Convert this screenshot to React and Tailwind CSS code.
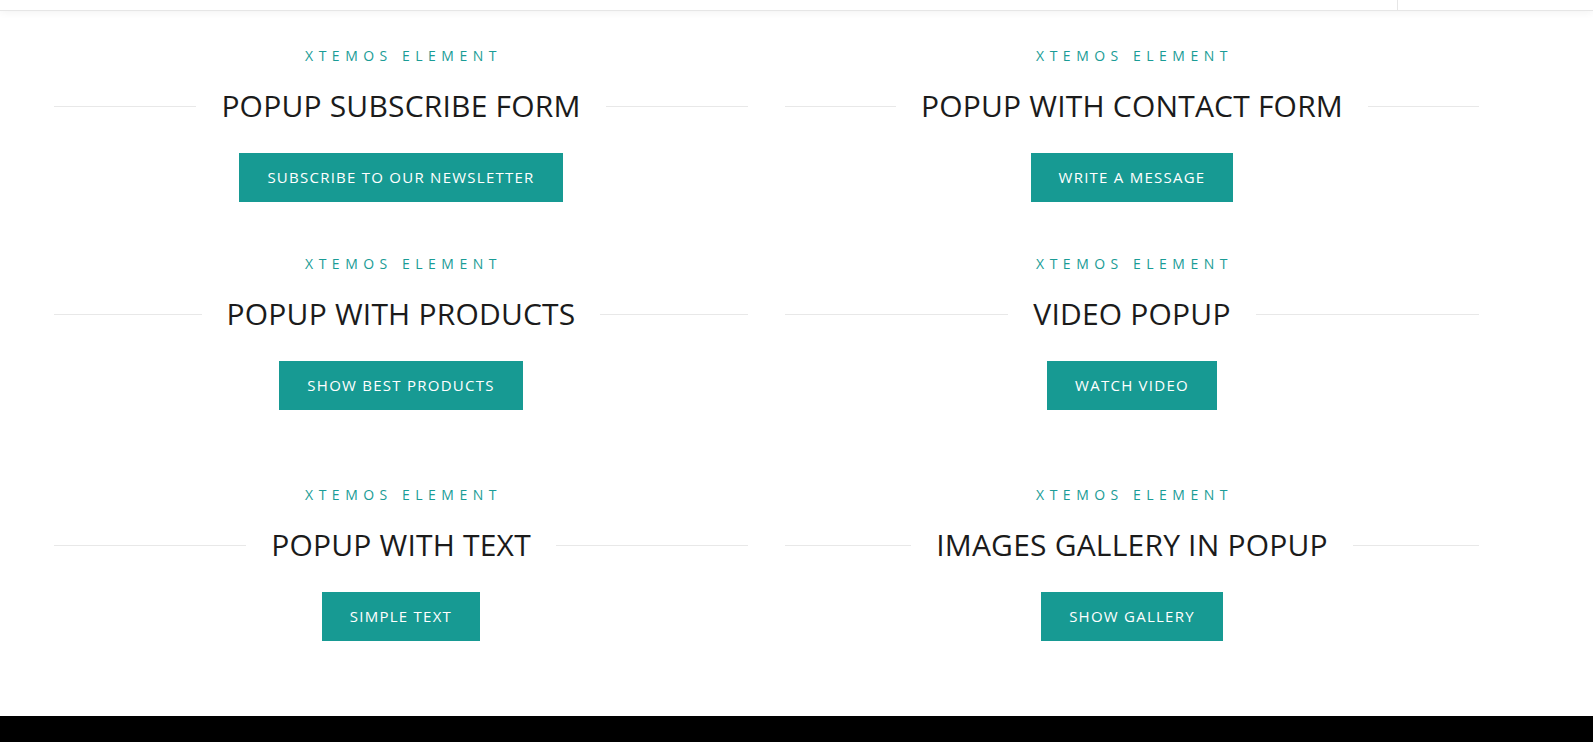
import React from "react";

const items = [
  ["POPUP SUBSCRIBE FORM", "SUBSCRIBE TO OUR NEWSLETTER"],
  ["POPUP WITH CONTACT FORM", "WRITE A MESSAGE"],
  ["POPUP WITH PRODUCTS", "SHOW BEST PRODUCTS"],
  ["VIDEO POPUP", "WATCH VIDEO"],
  ["POPUP WITH TEXT", "SIMPLE TEXT"],
  ["IMAGES GALLERY IN POPUP", "SHOW GALLERY"],
];

function Block({ title, button }) {
  return (
    <div className="flex flex-col items-center">
      <div className="h-[20px] leading-[20px] text-[14px] tracking-[5.5px] text-[#1a9c96] pl-[5px]">
        XTEMOS ELEMENT
      </div>
      <div className="mt-[20px] flex w-full items-center">
        <div className="h-px flex-1 bg-[#e8e8e8]" />
        <h4 className="px-[25px] h-[40px] leading-[40px] text-[30px] tracking-[0.2px] font-normal text-[#1b1b1b]">
          {title}
        </h4>
        <div className="h-px flex-1 bg-[#e8e8e8]" />
      </div>
      <button className="mt-[27px] h-[49px] px-[28px] bg-[#179a93] text-white text-[15px] font-medium tracking-[1.25px]">
        {button}
      </button>
    </div>
  );
}

export default function App() {
  return (
    <div className="min-h-[742px] bg-white flex flex-col" style={{ fontFamily: '"Open Sans", "Liberation Sans", sans-serif' }}>
      <header className="h-[11px] border-b border-[#e6e6e6] shadow-[0_1px_8px_rgba(0,0,0,0.06)] flex justify-end">
        <div className="w-[196px] border-l border-[#e6e6e6]" />
      </header>
      <main className="flex-1 pl-[54px] pt-[35px]">
        <div className="grid grid-cols-[694px_694px] gap-x-[37px]">
          <Block title={items[0][0]} button={items[0][1]} />
          <Block title={items[1][0]} button={items[1][1]} />
          <div className="col-span-2 h-[52px]" />
          <Block title={items[2][0]} button={items[2][1]} />
          <Block title={items[3][0]} button={items[3][1]} />
          <div className="col-span-2 h-[75px]" />
          <Block title={items[4][0]} button={items[4][1]} />
          <Block title={items[5][0]} button={items[5][1]} />
        </div>
      </main>
      <footer className="h-[26px] bg-black" />
    </div>
  );
}
